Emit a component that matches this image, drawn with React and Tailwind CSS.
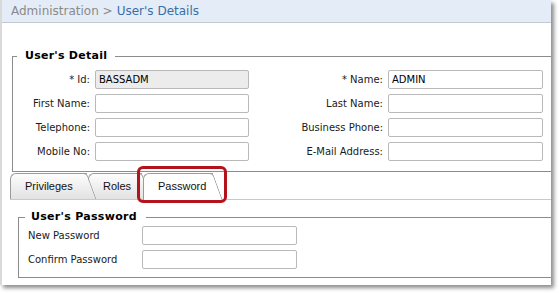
import React from "react";

const label = "font-['DejaVu_Sans',sans-serif] text-[10px] text-[#1a1a1a]";
const inputBase =
  "h-[19px] border border-[#b9b9b9] rounded-[2px] px-[3px] font-['DejaVu_Sans',sans-serif] text-[10px] text-black outline-none";

const detailRows = [
  { l1: "* Id:", v1: "BASSADM", ro: true, l2: "* Name:", v2: "ADMIN" },
  { l1: "First Name:", v1: "", l2: "Last Name:", v2: "" },
  { l1: "Telephone:", v1: "", l2: "Business Phone:", v2: "" },
  { l1: "Mobile No:", v1: "", l2: "E-Mail Address:", v2: "" },
];

const Tab = ({ text, active, outer }) => {
  const fill = active ? "bg-white" : "bg-linear-to-b from-[#fdfdfd] to-[#e2e2e2]";
  return (
    <div className={outer}>
      <div
        className={`absolute left-0 top-0 bottom-0 right-[10px] rounded-tl-[6px] border-l border-t border-[#9b9b9b] ${fill}`}
      />
      <div
        className={`absolute top-0 bottom-0 right-[10px] w-[14px] origin-top skew-x-[20deg] rounded-tr-[4px] border-r border-t border-[#9b9b9b] ${fill}`}
      />
      <span className="relative flex h-full items-center pl-[15px] font-['Liberation_Sans',sans-serif] text-[11px] text-[#111]">
        {text}
      </span>
    </div>
  );
};

const App = () => {
  return (
    <div className="h-[293px] w-[559px] bg-white">
      <div className="relative h-[285px] w-[551px] overflow-hidden border-l-[2px] border-[#d9d9d9] bg-white shadow-[3px_3px_4px_rgba(0,0,0,0.45)]">
        <div className="flex h-[23px] items-center border-b border-[#c2c9d1] bg-[#e4edf7] pl-[9px] font-['DejaVu_Sans',sans-serif] text-[12px]">
          <span className="text-[#8a8a8a]">Administration &gt; </span>
          <span className="ml-[4px] text-[#3a6ea5]">User's Details</span>
        </div>

        <fieldset className="ml-[10px] mt-[26px] w-[570px] border border-[#8c8c8c] p-0">
          <legend className="ml-[4px] px-[8px] font-['DejaVu_Sans',sans-serif] text-[11px] font-bold leading-[14px] tracking-[0.25px] text-black">
            User's Detail
          </legend>
          <div className="flex flex-col gap-[5px] pb-[10px] pt-[7px]">
            {detailRows.map((r, i) => (
              <div key={i} className="flex h-[19px] items-center">
                <div className={`w-[82px] pr-[5px] text-right ${label}`}>{r.l1}</div>
                <input
                  readOnly
                  defaultValue={r.v1}
                  className={`w-[154px] ${inputBase} ${r.ro ? "bg-[#ececec]" : "bg-white"}`}
                />
                <div className={`w-[139px] pr-[5px] text-right ${label}`}>{r.l2}</div>
                <input readOnly defaultValue={r.v2} className={`w-[155px] bg-white ${inputBase}`} />
              </div>
            ))}
          </div>
        </fieldset>

        <div className="ml-[8px] flex h-[28px] items-end border-b border-[#c9c9c9]">
          <Tab text="Privileges" outer="relative z-[3] h-[26px] w-[87px]" />
          <Tab text="Roles" outer="relative z-[2] ml-[-9px] h-[26px] w-[64px]" />
          <Tab text="Password" active outer="relative z-[4] mb-[-1px] ml-[-9px] h-[27px] w-[80px]" />
        </div>

        <fieldset className="ml-[16px] mt-[10px] w-[560px] border border-[#8c8c8c] p-0">
          <legend className="ml-[6px] pl-[6px] pr-[9px] font-['DejaVu_Sans',sans-serif] text-[11px] font-bold leading-[14px] tracking-[0.3px] text-black">
            User's Password
          </legend>
          <div className="flex flex-col gap-[5px] pb-[8px] pt-[2px]">
            {["New Password", "Confirm Password"].map((t) => (
              <div key={t} className="flex h-[19px] items-center">
                <div className={`w-[123px] pl-[9px] ${label}`}>{t}</div>
                <input readOnly type="password" className={`w-[155px] bg-white ${inputBase}`} />
              </div>
            ))}
          </div>
        </fieldset>

        <div className="absolute left-[135px] top-[166px] z-10 h-[37px] w-[90px] rounded-[6px] border-[3px] border-[#b3131a]" />
      </div>
    </div>
  );
};

export default App;
